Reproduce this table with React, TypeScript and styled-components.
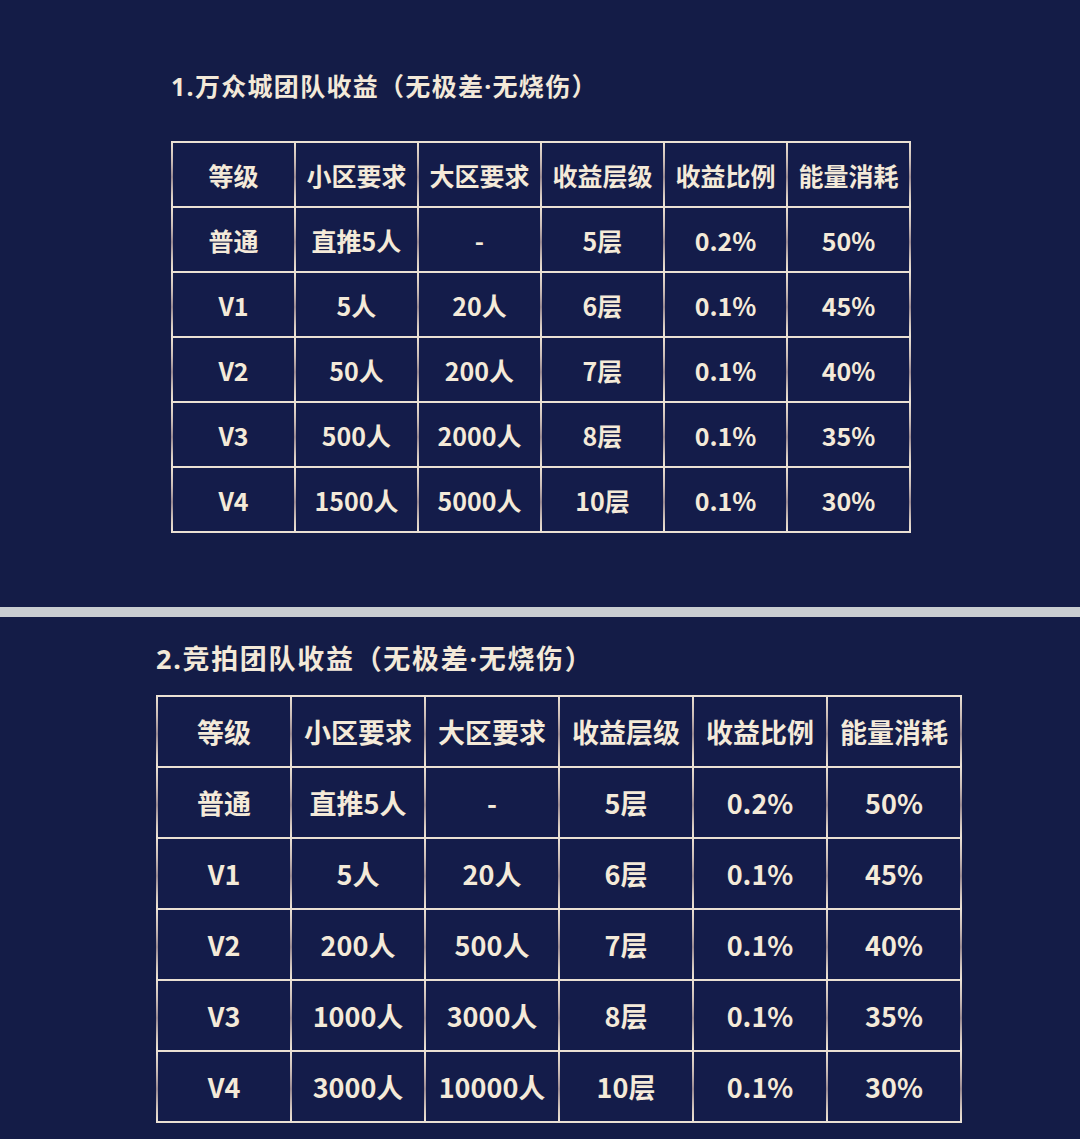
import React from "react";
import styled, { createGlobalStyle } from "styled-components";

const GlobalStyle = createGlobalStyle`
  html, body {
    margin: 0;
    padding: 0;
    background: #141c47;
  }
  body {
    font-family: "Noto Sans CJK SC", "Noto Sans", sans-serif;
  }
`;

const Page = styled.div`
  width: 1080px;
  height: 1139px;
  overflow: hidden;
  background: #141c47;
  display: flex;
  flex-direction: column;
`;

const Section = styled.section<{ $padLeft: number; $padTop: number; $gap: number; $height?: number }>`
  display: flex;
  flex-direction: column;
  align-items: flex-start;
  padding-left: ${(p) => p.$padLeft}px;
  padding-top: ${(p) => p.$padTop}px;
  gap: ${(p) => p.$gap}px;
  height: ${(p) => (p.$height ? `${p.$height}px` : "auto")};
  box-sizing: border-box;
  flex-shrink: 0;
`;

const Title = styled.h2<{ $size: number; $spacing: number }>`
  margin: 0;
  font-family: "Noto Sans", "Noto Sans CJK SC", sans-serif;
  font-weight: 700;
  font-size: ${(p) => p.$size}px;
  line-height: ${(p) => p.$size + 2}px;
  color: #f3e9d9;
  letter-spacing: ${(p) => p.$spacing}px;
`;

const Divider = styled.div`
  height: 10px;
  background: #c9cdd1;
  flex-shrink: 0;
`;

const Grid = styled.div<{ $col: number; $row: number }>`
  display: grid;
  grid-template-columns: repeat(6, ${(p) => p.$col}px);
  grid-auto-rows: ${(p) => p.$row}px;
  gap: 2px;
  padding: 2px;
  background: repeating-linear-gradient(
    180deg,
    #ece2d5 0px,
    #cbbcb6 ${(p) => Math.round((p.$row + 2) * 0.3)}px,
    #9a8a92 ${(p) => Math.round((p.$row + 2) * 0.55)}px,
    #d9ccc2 ${(p) => Math.round((p.$row + 2) * 0.85)}px,
    #ece2d5 ${(p) => p.$row + 2}px
  );
  background-position: 0 0;
`;

const Cell = styled.div<{ $size: number }>`
  background: #141c4a;
  display: flex;
  align-items: center;
  justify-content: center;
  font-family: "Noto Sans CJK SC", "Noto Sans", sans-serif;
  font-weight: 700;
  font-size: ${(p) => p.$size}px;
  color: #f4ead9;
  white-space: nowrap;
`;

const headers = ["等级", "小区要求", "大区要求", "收益层级", "收益比例", "能量消耗"];

const table1 = [
  ["普通", "直推5人", "-", "5层", "0.2%", "50%"],
  ["V1", "5人", "20人", "6层", "0.1%", "45%"],
  ["V2", "50人", "200人", "7层", "0.1%", "40%"],
  ["V3", "500人", "2000人", "8层", "0.1%", "35%"],
  ["V4", "1500人", "5000人", "10层", "0.1%", "30%"],
];

const table2 = [
  ["普通", "直推5人", "-", "5层", "0.2%", "50%"],
  ["V1", "5人", "20人", "6层", "0.1%", "45%"],
  ["V2", "200人", "500人", "7层", "0.1%", "40%"],
  ["V3", "1000人", "3000人", "8层", "0.1%", "35%"],
  ["V4", "3000人", "10000人", "10层", "0.1%", "30%"],
];

function RewardTable({ rows, col, row, size }: { rows: string[][]; col: number; row: number; size: number }) {
  return (
    <Grid $col={col} $row={row}>
      {headers.map((h) => (
        <Cell key={h} $size={size}>
          {h}
        </Cell>
      ))}
      {rows.map((r, i) =>
        r.map((c, j) => (
          <Cell key={`${i}-${j}`} $size={size}>
            {c}
          </Cell>
        ))
      )}
    </Grid>
  );
}

export default function App() {
  return (
    <>
      <GlobalStyle />
      <Page>
        <Section $padLeft={171} $padTop={73} $gap={41} $height={607}>
          <Title $size={25} $spacing={1.3}>1.万众城团队收益（无极差·无烧伤）</Title>
          <RewardTable rows={table1} col={121} row={63} size={25} />
        </Section>
        <Divider />
        <Section $padLeft={156} $padTop={27} $gap={22}>
          <Title $size={27} $spacing={1.7}>2.竞拍团队收益（无极差·无烧伤）</Title>
          <RewardTable rows={table2} col={132} row={69} size={27} />
        </Section>
      </Page>
    </>
  );
}
